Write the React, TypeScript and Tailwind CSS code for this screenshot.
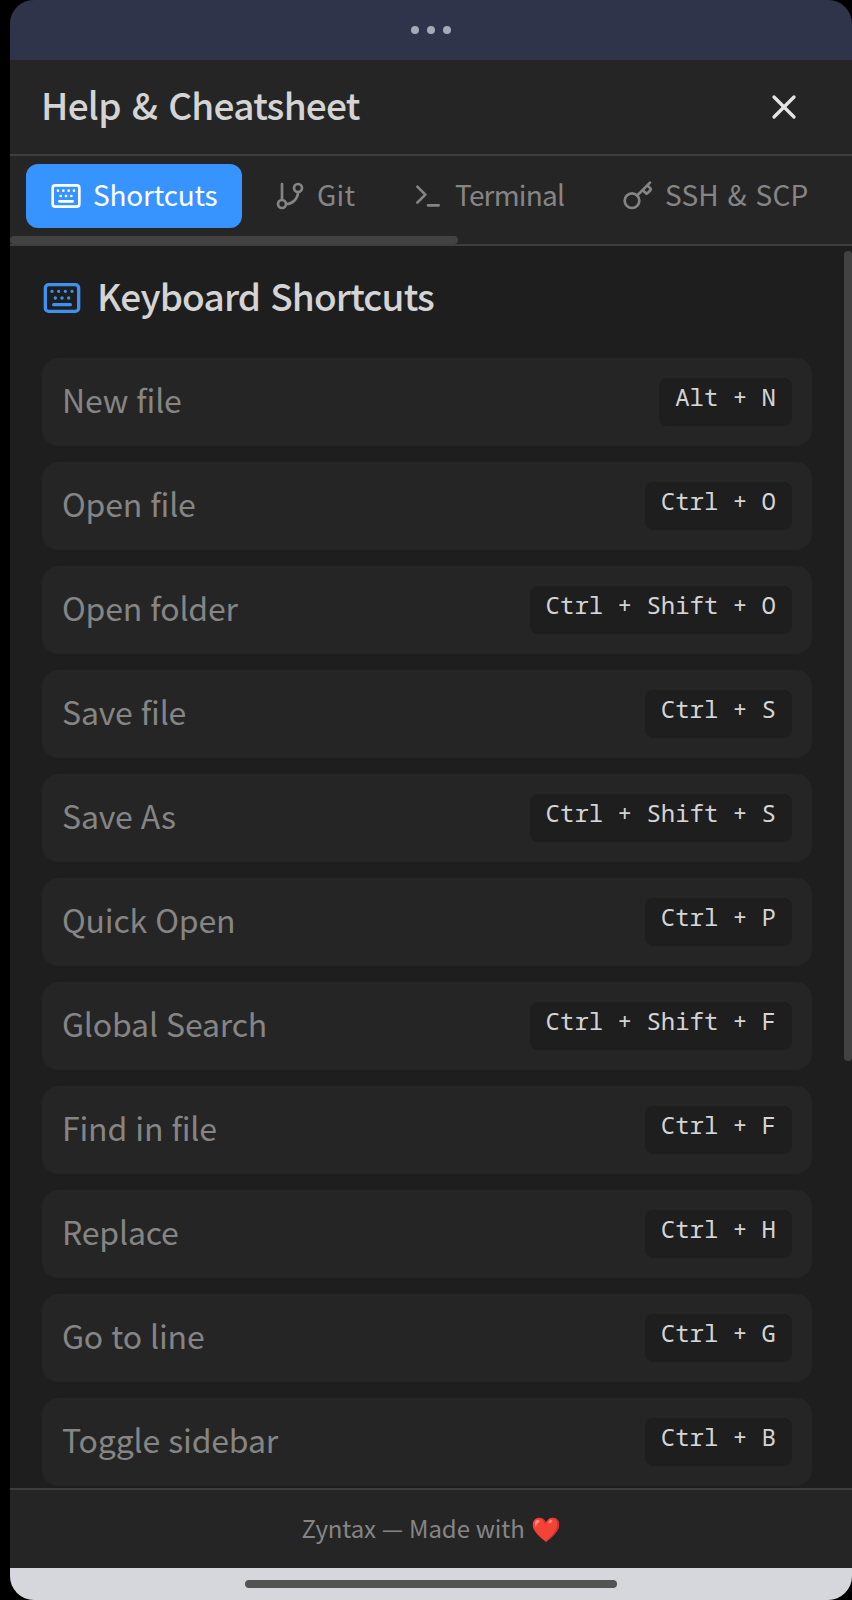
import type { ReactNode } from "react";
import { X } from "lucide-react";

function Svg({ className, children }: { className: string; children: ReactNode }) {
  return (
    <svg viewBox="0 0 24 24" fill="none" stroke="currentColor" strokeWidth={2} strokeLinecap="round" strokeLinejoin="round" className={className}>
      {children}
    </svg>
  );
}

function KeyboardIcon({ className }: { className: string }) {
  return (
    <Svg className={className}>
      <path d="M10 8h.01M12 12h.01M14 8h.01M16 12h.01M18 8h.01M6 8h.01M7 16h10M8 12h.01" />
      <rect x="2" y="4" width="20" height="16" rx="2" />
    </Svg>
  );
}

const tabs = [
  { label: "Shortcuts", width: "w-[124px]", tracking: "tracking-[-0.2px]", icon: <KeyboardIcon className="size-8 shrink-0" /> },
  {
    label: "Git", width: "w-[38px]", tracking: "tracking-[0.2px]",
    icon: <Svg className="size-8 shrink-0"><path d="M6 3v12M18 9a9 9 0 0 1-9 9" /><circle cx="18" cy="6" r="3" /><circle cx="6" cy="18" r="3" /></Svg>,
  },
  {
    label: "Terminal", width: "w-[110px]", tracking: "tracking-[-0.8px]",
    icon: <Svg className="size-8 shrink-0"><path d="m4 17 6-6-6-6M12 19h8" /></Svg>,
  },
  {
    label: "SSH & SCP", width: "w-[146px]", tracking: "tracking-[0.2px] [word-spacing:2.2px]",
    icon: <Svg className="size-8 shrink-0"><path d="m15.5 7.5 2.3 2.3a1 1 0 0 0 1.4 0l2.1-2.1a1 1 0 0 0 0-1.4L19 4M21 2l-9.6 9.6" /><circle cx="7.5" cy="15.5" r="5.5" /></Svg>,
  },
];

const shortcuts = [
  { label: "New file", keys: "Alt + N" },
  { label: "Open file", keys: "Ctrl + O" },
  { label: "Open folder", keys: "Ctrl + Shift + O" },
  { label: "Save file", keys: "Ctrl + S" },
  { label: "Save As", keys: "Ctrl + Shift + S" },
  { label: "Quick Open", keys: "Ctrl + P" },
  { label: "Global Search", keys: "Ctrl + Shift + F" },
  { label: "Find in file", keys: "Ctrl + F" },
  { label: "Replace", keys: "Ctrl + H" },
  { label: "Go to line", keys: "Ctrl + G" },
  { label: "Toggle sidebar", keys: "Ctrl + B" },
];

export default function App() {
  return (
    <div className="h-[1600px] w-[852px] overflow-hidden bg-black pl-2.5 font-['Noto_Sans_CJK_SC',sans-serif]">
      <div className="flex h-full flex-col overflow-hidden rounded-[24px] bg-[#1e1e1e]">
        <div className="flex h-[60px] shrink-0 items-center justify-center gap-2 bg-[#2f344a]">
          <span className="size-2 rounded-full bg-[#a5a9b8]" />
          <span className="size-2 rounded-full bg-[#a5a9b8]" />
          <span className="size-2 rounded-full bg-[#a5a9b8]" />
        </div>

        <header className="flex h-24 shrink-0 items-center justify-between border-b-2 border-[#3e3e3e] bg-[#252525] pr-12 pl-[31px]">
          <h1 className="pb-1.5 text-[37px] leading-[56px] font-medium tracking-[-0.75px] whitespace-nowrap text-[#d4d4d4] [word-spacing:3.5px]">Help &amp; Cheatsheet</h1>
          <button aria-label="Close" className="text-[#e4e4e4]"><X className="size-10" strokeWidth={2} /></button>
        </header>

        <nav className="relative flex h-[90px] shrink-0 gap-2 overflow-hidden border-b-2 border-[#3e3e3e] bg-[#252525] px-4 pt-2">
          {tabs.map((tab, i) => (
            <button key={tab.label} className={`flex h-16 shrink-0 items-center gap-3 rounded-xl px-6 ${i === 0 ? "bg-[#3794ff] text-white" : "text-[#858585]"}`}>
              {tab.icon}
              <span className={`-ml-px pb-1 text-left text-[28px] leading-[42px] whitespace-nowrap ${tab.width} ${tab.tracking} mr-px`}>{tab.label}</span>
            </button>
          ))}
          <span className="absolute bottom-0 left-0 h-2 w-[448px] rounded-full bg-[#424242]" />
        </nav>

        <main className="relative min-h-0 flex-1 overflow-hidden pt-8 pr-10 pl-8">
          <div className="flex h-10 items-center gap-4">
            <KeyboardIcon className="size-10 shrink-0 text-[#3d91f2]" />
            <h2 className="-ml-px pb-1.5 text-[37px] leading-10 font-medium tracking-[-0.85px] whitespace-nowrap text-[#d4d4d4] [word-spacing:2.5px]">Keyboard Shortcuts</h2>
          </div>
          <ul className="mt-10 flex flex-col gap-4">
            {shortcuts.map((s) => (
              <li key={s.label} className="flex h-[88px] shrink-0 items-center justify-between rounded-2xl bg-[#252525] px-5">
                <span className="pb-[7px] text-[32px] leading-[48px] tracking-[-0.18px] whitespace-nowrap text-[#858585] [word-spacing:1.2px]">{s.label}</span>
                <kbd className="h-12 rounded-lg bg-[#1e1e1e] px-4 pt-[3px] font-['Noto_Sans_Mono','DejaVu_Sans_Mono',monospace] text-[24px] leading-8 whitespace-pre text-[#d4d4d4]">{s.keys}</kbd>
              </li>
            ))}
          </ul>
          <span className="absolute top-[5px] right-0 h-[810px] w-2 rounded-full bg-[#424242]" />
        </main>

        <footer className="flex h-20 shrink-0 items-center justify-center border-t-2 border-[#3e3e3e] bg-[#252525] text-[24px] leading-9 text-[#858585]">
          <span className="pb-0.5 tracking-[-0.1px] whitespace-nowrap [word-spacing:0.6px]">Zyntax — Made with ❤️</span>
        </footer>
        <div className="flex h-8 shrink-0 justify-center bg-[#d6d7dc] pt-3">
          <span className="h-2 w-[372px] rounded-full bg-[#525453]" />
        </div>
      </div>
    </div>
  );
}
